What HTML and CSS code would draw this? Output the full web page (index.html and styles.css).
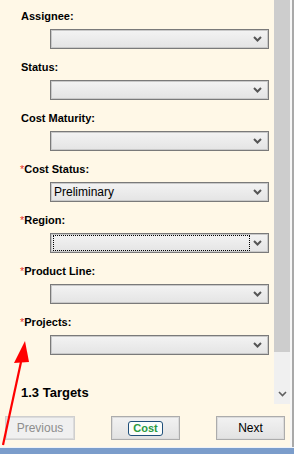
FILE: index.html
```html
<!DOCTYPE html>
<html>
<head>
<meta charset="utf-8">
<link rel="stylesheet" href="styles.css">
</head>
<body>
<div class="window">
  <div class="scroll-area">
    <div class="form">
      <div class="field">
        <div class="label">Assignee:</div>
        <div class="select"><span class="value"></span><svg class="chev" width="9" height="6" viewBox="0 0 9 6"><polyline points="1,1 4.5,4.5 8,1" fill="none" stroke="#555" stroke-width="2"/></svg></div>
      </div>
      <div class="field">
        <div class="label">Status:</div>
        <div class="select"><span class="value"></span><svg class="chev" width="9" height="6" viewBox="0 0 9 6"><polyline points="1,1 4.5,4.5 8,1" fill="none" stroke="#555" stroke-width="2"/></svg></div>
      </div>
      <div class="field">
        <div class="label">Cost Maturity:</div>
        <div class="select"><span class="value"></span><svg class="chev" width="9" height="6" viewBox="0 0 9 6"><polyline points="1,1 4.5,4.5 8,1" fill="none" stroke="#555" stroke-width="2"/></svg></div>
      </div>
      <div class="field">
        <div class="label req"><span class="star">*</span>Cost Status:</div>
        <div class="select"><span class="value">Preliminary</span><svg class="chev" width="9" height="6" viewBox="0 0 9 6"><polyline points="1,1 4.5,4.5 8,1" fill="none" stroke="#555" stroke-width="2"/></svg></div>
      </div>
      <div class="field">
        <div class="label req"><span class="star">*</span>Region:</div>
        <div class="select focused"><span class="value focus-box"></span><svg class="chev" width="9" height="6" viewBox="0 0 9 6"><polyline points="1,1 4.5,4.5 8,1" fill="none" stroke="#555" stroke-width="2"/></svg></div>
      </div>
      <div class="field">
        <div class="label req"><span class="star">*</span>Product Line:</div>
        <div class="select"><span class="value"></span><svg class="chev" width="9" height="6" viewBox="0 0 9 6"><polyline points="1,1 4.5,4.5 8,1" fill="none" stroke="#555" stroke-width="2"/></svg></div>
      </div>
      <div class="field">
        <div class="label req"><span class="star">*</span>Projects:</div>
        <div class="select"><span class="value"></span><svg class="chev" width="9" height="6" viewBox="0 0 9 6"><polyline points="1,1 4.5,4.5 8,1" fill="none" stroke="#555" stroke-width="2"/></svg></div>
      </div>
      <div class="section">1.3 Targets</div>
    </div>
    <div class="scrollbar">
      <div class="thumb"></div>
      <div class="track">
        <svg class="sb-chev" width="9" height="6" viewBox="0 0 9 6"><polyline points="1,1 4.5,4.5 8,1" fill="none" stroke="#606060" stroke-width="1.6"/></svg>
      </div>
    </div>
  </div>
  <div class="buttons">
    <div class="btn disabled">Previous</div>
    <div class="btn"><span class="badge">Cost</span></div>
    <div class="btn">Next</div>
  </div>
  <div class="bluebar"></div>
  <svg class="arrow" width="40" height="120" viewBox="0 0 40 120">
    <line x1="3" y1="105" x2="21" y2="22" stroke="#ff0000" stroke-width="2.2"/>
    <polygon points="25,1 14,23 29,22" fill="#ff0000"/>
  </svg>
</div>
</body>
</html>
```

FILE: styles.css
```css
html, body {
  margin: 0;
  padding: 0;
}
body {
  width: 294px;
  height: 454px;
  overflow: hidden;
  font-family: "Liberation Sans", Arial, sans-serif;
  background: #fff8e7;
}
.window {
  position: relative;
  width: 294px;
  height: 454px;
  display: flex;
  flex-direction: column;
  background: #fff8e7;
  box-shadow: inset -2px 0 0 #a9a9a9, inset -4px 0 0 #f7f7f7;
}
.scroll-area {
  display: flex;
  height: 405px;
}
.form {
  width: 274px;
  padding: 9px 0 0 21px;
  box-sizing: border-box;
  display: flex;
  flex-direction: column;
}
.field {
  display: flex;
  flex-direction: column;
  margin-bottom: 11px;
}
.label {
  font-size: 11px;
  font-weight: bold;
  line-height: 14px;
  color: #000;
  height: 14px;
  margin-bottom: 6px;
}
.label.req {
  margin-left: -1px;
}
.star {
  color: #e8302a;
  font-weight: normal;
}
.select {
  margin-left: 29px;
  width: 219px;
  height: 20px;
  box-sizing: border-box;
  border: 1px solid #7a7a7a;
  box-shadow: inset 0 0 0 1px #c9c9c9;
  background: linear-gradient(#f3f3f3, #e4e4e4);
  display: flex;
  align-items: center;
  padding: 0 6px 0 2px;
}
.value {
  flex: 1;
  font-size: 12px;
  line-height: 16px;
  height: 16px;
  padding-left: 1px;
  color: #000;
}
.focus-box {
  height: 14px;
  box-sizing: border-box;
  height: 16px;
  border: 1px dotted #000;
}
.chev {
  display: block;
  margin-left: 3px;
}
.section {
  margin-top: 19px;
  font-size: 13px;
  font-weight: bold;
  line-height: 16px;
}
.scrollbar {
  width: 16px;
  display: flex;
  flex-direction: column;
}
.thumb {
  height: 352px;
  background: #cdcdcd;
}
.track {
  flex: 1;
  background: #f0f0f0;
  display: flex;
  align-items: flex-end;
  justify-content: center;
  padding-bottom: 7px;
}
.sb-chev {
  display: block;
}
.buttons {
  height: 43px;
  box-sizing: border-box;
  width: 290px;
  padding: 12px 5px 0 5px;
  display: flex;
  justify-content: space-between;
  align-items: flex-start;
}
.btn {
  width: 69px;
  height: 24px;
  box-sizing: border-box;
  border: 1px solid #acacac;
  box-shadow: inset 0 0 0 1px #dcdcdc;
  background: linear-gradient(#f2f2f2, #e2e2e2);
  display: flex;
  align-items: center;
  justify-content: center;
  font-size: 12px;
  color: #000;
}
.btn.disabled {
  width: 70px;
  color: #8d8d8d;
  border-color: #cfcfcf;
  background: #f0f0f0;
}
.badge {
  font-size: 11px;
  font-weight: bold;
  color: #2a9a3f;
  border: 1px solid #1f4f7a;
  border-radius: 3px;
  background: #fbfdfb;
  padding: 0 4px;
  line-height: 13px;
  height: 13px;
}
.bluebar {
  height: 6px;
  background: #7b9dcb;
  border-top: 1px solid #eef2f8;
}
.arrow {
  position: absolute;
  left: 0;
  top: 340px;
}
```
